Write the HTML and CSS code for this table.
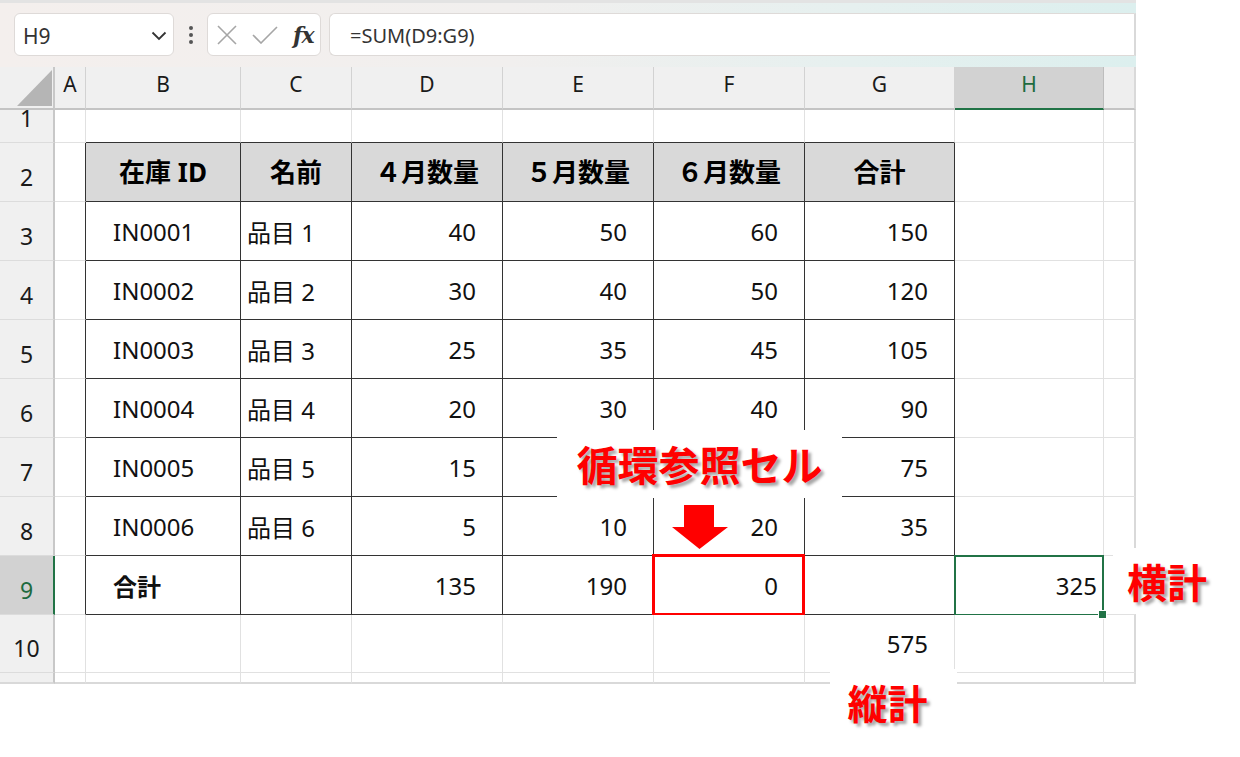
FILE: index.html
```html
<!DOCTYPE html>
<html lang="ja">
<head>
<meta charset="utf-8">
<title>循環参照</title>
<link rel="stylesheet" href="styles.css">
</head>
<body>
<div class="page">
  <div class="excel">
    <div class="topbar">
      <div class="namebox">
        <span class="nb-text">H9</span>
        <svg class="chev" width="16" height="10" viewBox="0 0 16 10"><polyline points="1.5,1.5 8,8 14.5,1.5" fill="none" stroke="#333" stroke-width="1.8"/></svg>
      </div>
      <div class="dots">
        <svg width="6" height="20" viewBox="0 0 6 20"><circle cx="3" cy="3" r="2" fill="#555"/><circle cx="3" cy="10" r="2" fill="#555"/><circle cx="3" cy="17" r="2" fill="#555"/></svg>
      </div>
      <div class="fxbox">
        <svg class="ico-x" width="22" height="22" viewBox="0 0 22 22"><path d="M2 2 L20 20 M20 2 L2 20" stroke="#a6a6a6" stroke-width="1.6" fill="none"/></svg>
        <svg class="ico-ok" width="26" height="18" viewBox="0 0 26 18"><polyline points="1,9 9,17 25,1" stroke="#a6a6a6" stroke-width="1.6" fill="none"/></svg>
        <span class="fx">fx</span>
      </div>
      <div class="formula">=SUM(D9:G9)</div>
    </div>

    <div class="sheet">
      <!-- header row -->
      <div class="corner"><svg width="55" height="41" viewBox="0 0 55 41"><polygon points="17,39 52,3 52,39" fill="#b5b5b5"/></svg></div>
      <div class="ch">A</div><div class="ch">B</div><div class="ch">C</div><div class="ch">D</div><div class="ch">E</div><div class="ch">F</div><div class="ch">G</div><div class="ch sel">H</div><div class="ch end"></div>

      <!-- row 1 -->
      <div class="rh">1</div><div class="c"></div><div class="c at"></div><div class="c at"></div><div class="c at"></div><div class="c at"></div><div class="c at"></div><div class="c at"></div><div class="c"></div><div class="c end"></div>

      <!-- row 2 -->
      <div class="rh">2</div><div class="c al"></div>
      <div class="c t th">在庫 ID</div><div class="c t th">名前</div><div class="c t th">４月数量</div><div class="c t th">５月数量</div><div class="c t th">６月数量</div><div class="c t th">合計</div>
      <div class="c"></div><div class="c end"></div>

      <!-- row 3 -->
      <div class="rh">3</div><div class="c al"></div>
      <div class="c t id">IN0001</div><div class="c t nm">品目 1</div><div class="c t num">40</div><div class="c t num">50</div><div class="c t num">60</div><div class="c t num">150</div>
      <div class="c"></div><div class="c end"></div>

      <!-- row 4 -->
      <div class="rh">4</div><div class="c al"></div>
      <div class="c t id">IN0002</div><div class="c t nm">品目 2</div><div class="c t num">30</div><div class="c t num">40</div><div class="c t num">50</div><div class="c t num">120</div>
      <div class="c"></div><div class="c end"></div>

      <!-- row 5 -->
      <div class="rh">5</div><div class="c al"></div>
      <div class="c t id">IN0003</div><div class="c t nm">品目 3</div><div class="c t num">25</div><div class="c t num">35</div><div class="c t num">45</div><div class="c t num">105</div>
      <div class="c"></div><div class="c end"></div>

      <!-- row 6 -->
      <div class="rh">6</div><div class="c al"></div>
      <div class="c t id">IN0004</div><div class="c t nm">品目 4</div><div class="c t num">20</div><div class="c t num">30</div><div class="c t num">40</div><div class="c t num">90</div>
      <div class="c"></div><div class="c end"></div>

      <!-- row 7 (E7 and F7 are covered by the annotation) -->
      <div class="rh">7</div><div class="c al"></div>
      <div class="c t id">IN0005</div><div class="c t nm">品目 5</div><div class="c t num">15</div><div class="c t num"></div><div class="c t num"></div><div class="c t num">75</div>
      <div class="c"></div><div class="c end"></div>

      <!-- row 8 -->
      <div class="rh">8</div><div class="c al"></div>
      <div class="c t id">IN0006</div><div class="c t nm">品目 6</div><div class="c t num">5</div><div class="c t num">10</div><div class="c t num">20</div><div class="c t num">35</div>
      <div class="c"></div><div class="c end"></div>

      <!-- row 9 -->
      <div class="rh sel">9</div><div class="c al"></div>
      <div class="c t id b">合計</div><div class="c t"></div><div class="c t num">135</div><div class="c t num">190</div><div class="c t num circ">0</div><div class="c t"></div>
      <div class="c num active">325</div><div class="c end"></div>

      <!-- row 10 -->
      <div class="rh">10</div><div class="c"></div><div class="c"></div><div class="c"></div><div class="c"></div><div class="c"></div><div class="c"></div><div class="c num">575</div><div class="c"></div><div class="c end"></div>

      <!-- row 11 (partial) -->
      <div class="rh last"></div><div class="c last"></div><div class="c last"></div><div class="c last"></div><div class="c last"></div><div class="c last"></div><div class="c last"></div><div class="c last"></div><div class="c last"></div><div class="c last end"></div>
    </div>
  </div>

  <div class="label lbl-circ">循環参照セル</div>
  <svg class="arrow" width="58" height="45" viewBox="0 0 58 45"><polygon points="13,0 43,0 43,22 57,22 28.5,44 1,22 13,22" fill="#ff0000"/></svg>
  <div class="label lbl-h">横計</div>
  <div class="label lbl-v">縦計</div>
</div>
</body>
</html>
```

FILE: styles.css
```css
* { box-sizing: border-box; }
html, body { margin: 0; padding: 0; background: #fff; }
body {
  width: 1240px;
  height: 757px;
  overflow: hidden;
  font-family: "Noto Sans", "Noto Sans CJK JP", sans-serif;
  color: #111;
}
.page { position: relative; width: 1240px; height: 757px; }

.excel { width: 1136px; }

/* ---------- formula bar ---------- */
.topbar {
  height: 67px;
  display: flex;
  align-items: flex-start;
  padding: 10px 0 0 14px;
  border-top: 3px solid #e3e3e3;
  background: linear-gradient(90deg, #f4efed 0%, #f1efee 45%, #e6f0ef 75%, #dcefee 100%);
}
.namebox {
  width: 160px;
  height: 43px;
  background: #fff;
  border: 1px solid #dedad8;
  border-radius: 6px;
  display: flex;
  align-items: center;
  justify-content: space-between;
  padding: 0 6px 0 8px;
}
.nb-text { font-size: 21px; color: #333; padding-top: 3px; }
.chev { margin-top: 2px; }
.dots {
  width: 33px;
  height: 43px;
  display: flex;
  align-items: center;
  justify-content: center;
}
.fxbox {
  width: 114px;
  height: 43px;
  background: #fff;
  border: 1px solid #dedad8;
  border-radius: 6px;
  display: flex;
  align-items: center;
  padding-left: 8px;
}
.ico-x { margin-right: 14px; }
.ico-ok { margin-right: 15px; }
.fx {
  font-family: "DejaVu Serif", "Liberation Serif", serif;
  font-style: italic;
  font-weight: bold;
  font-size: 22px;
  color: #333;
  letter-spacing: -1px;
}
.formula {
  flex: 1;
  height: 43px;
  margin-left: 8px;
  background: #fff;
  border: 1px solid #dedad8;
  border-right: 2px solid #d9d9d9;
  border-radius: 6px 0 0 6px;
  display: flex;
  align-items: center;
  padding: 2px 0 0 20px;
  font-size: 20px;
  color: #333;
}

/* ---------- sheet grid ---------- */
.sheet {
  display: grid;
  grid-template-columns: 55px 31px 155px 111px 151px 151px 151px 150px 149px 32px;
  grid-template-rows: 43px 33px repeat(8, 59px) 58px 11px;
  font-size: 24px;
}
.corner {
  background: #f0f0f0;
  border-right: 2px solid #c8c8c8;
  border-bottom: 2px solid #c4c4c4;
  overflow: hidden;
}
.corner svg { display: block; }
.ch {
  background: #f0f0f0;
  border-right: 1px solid #d2d2d2;
  border-bottom: 2px solid #c4c4c4;
  display: flex;
  align-items: center;
  justify-content: center;
  padding-bottom: 8px;
  font-size: 21px;
  color: #1a1a1a;
}
.ch.sel {
  background: #d2d2d2;
  color: #1e6b3e;
  border-bottom: 2px solid #217346;
  border-right: 1px solid #bdbdbd;
}
.ch.end { background: #eeeeee; border-right: 2px solid #d9d9d9; }

.rh {
  background: #f0f0f0;
  border-right: 2px solid #c8c8c8;
  border-bottom: 1px solid #dcdcdc;
  display: flex;
  align-items: flex-end;
  justify-content: center;
  padding-bottom: 8px;
  font-size: 23px;
  color: #1a1a1a;
}
.rh.sel { background: #d2d2d2; color: #1e6b3e; border-right: 2px solid #217346; }
.rh.last { border-bottom: 2px solid #d9d9d9; }

.c {
  background: #fff;
  border-right: 1px solid #e1e1e1;
  border-bottom: 1px solid #e1e1e1;
  display: flex;
  align-items: center;
  white-space: nowrap;
  position: relative;
}
.c.end { border-right: 2px solid #d9d9d9; }
.c.last { border-bottom: 2px solid #d9d9d9; }
.c.al { border-right-color: #333; }
.c.at { border-bottom-color: #333; }
.c.t { border-right-color: #333; border-bottom-color: #333; }
.c.th {
  background: #d9d9d9;
  justify-content: center;
  font-weight: bold;
  font-size: 26px;
  color: #000;
  padding-bottom: 2px;
}
.c.id { padding-left: 27px; color: #111; }
.c.nm { padding-left: 6px; }
.c.num { justify-content: flex-end; padding-right: 26px; }
.c.b { font-weight: bold; }

.c.circ::after {
  content: "";
  position: absolute;
  left: -2px;
  top: -2px;
  right: -1px;
  bottom: -2px;
  border: 3px solid #ff0000;
}
.c.active { padding-right: 6px; }
.c.active::after {
  content: "";
  position: absolute;
  left: -1px;
  top: -1px;
  right: -1px;
  bottom: -2px;
  border: 2px solid #217346;
}
.c.active::before {
  content: "";
  position: absolute;
  right: -4px;
  bottom: -5px;
  width: 7px;
  height: 7px;
  background: #217346;
  border: 1px solid #fff;
  z-index: 2;
}

/* ---------- annotations ---------- */
.label {
  position: absolute;
  background: #fff;
  color: #ff0000;
  font-family: "Noto Sans CJK JP", sans-serif;
  font-weight: bold;
  font-size: 40px;
  line-height: 1;
  display: flex;
  align-items: center;
  justify-content: center;
  text-shadow: 3px 3px 3px rgba(0, 0, 0, 0.35);
}
.lbl-circ { left: 557px; top: 430px; width: 285px; height: 68px; font-size: 41px; padding-bottom: 2px; }
.lbl-h { left: 1113px; top: 548px; width: 108px; height: 66px; }
.lbl-v { left: 830px; top: 669px; width: 127px; height: 66px; padding-right: 12px; }
.arrow { position: absolute; left: 671px; top: 505px; }
```
